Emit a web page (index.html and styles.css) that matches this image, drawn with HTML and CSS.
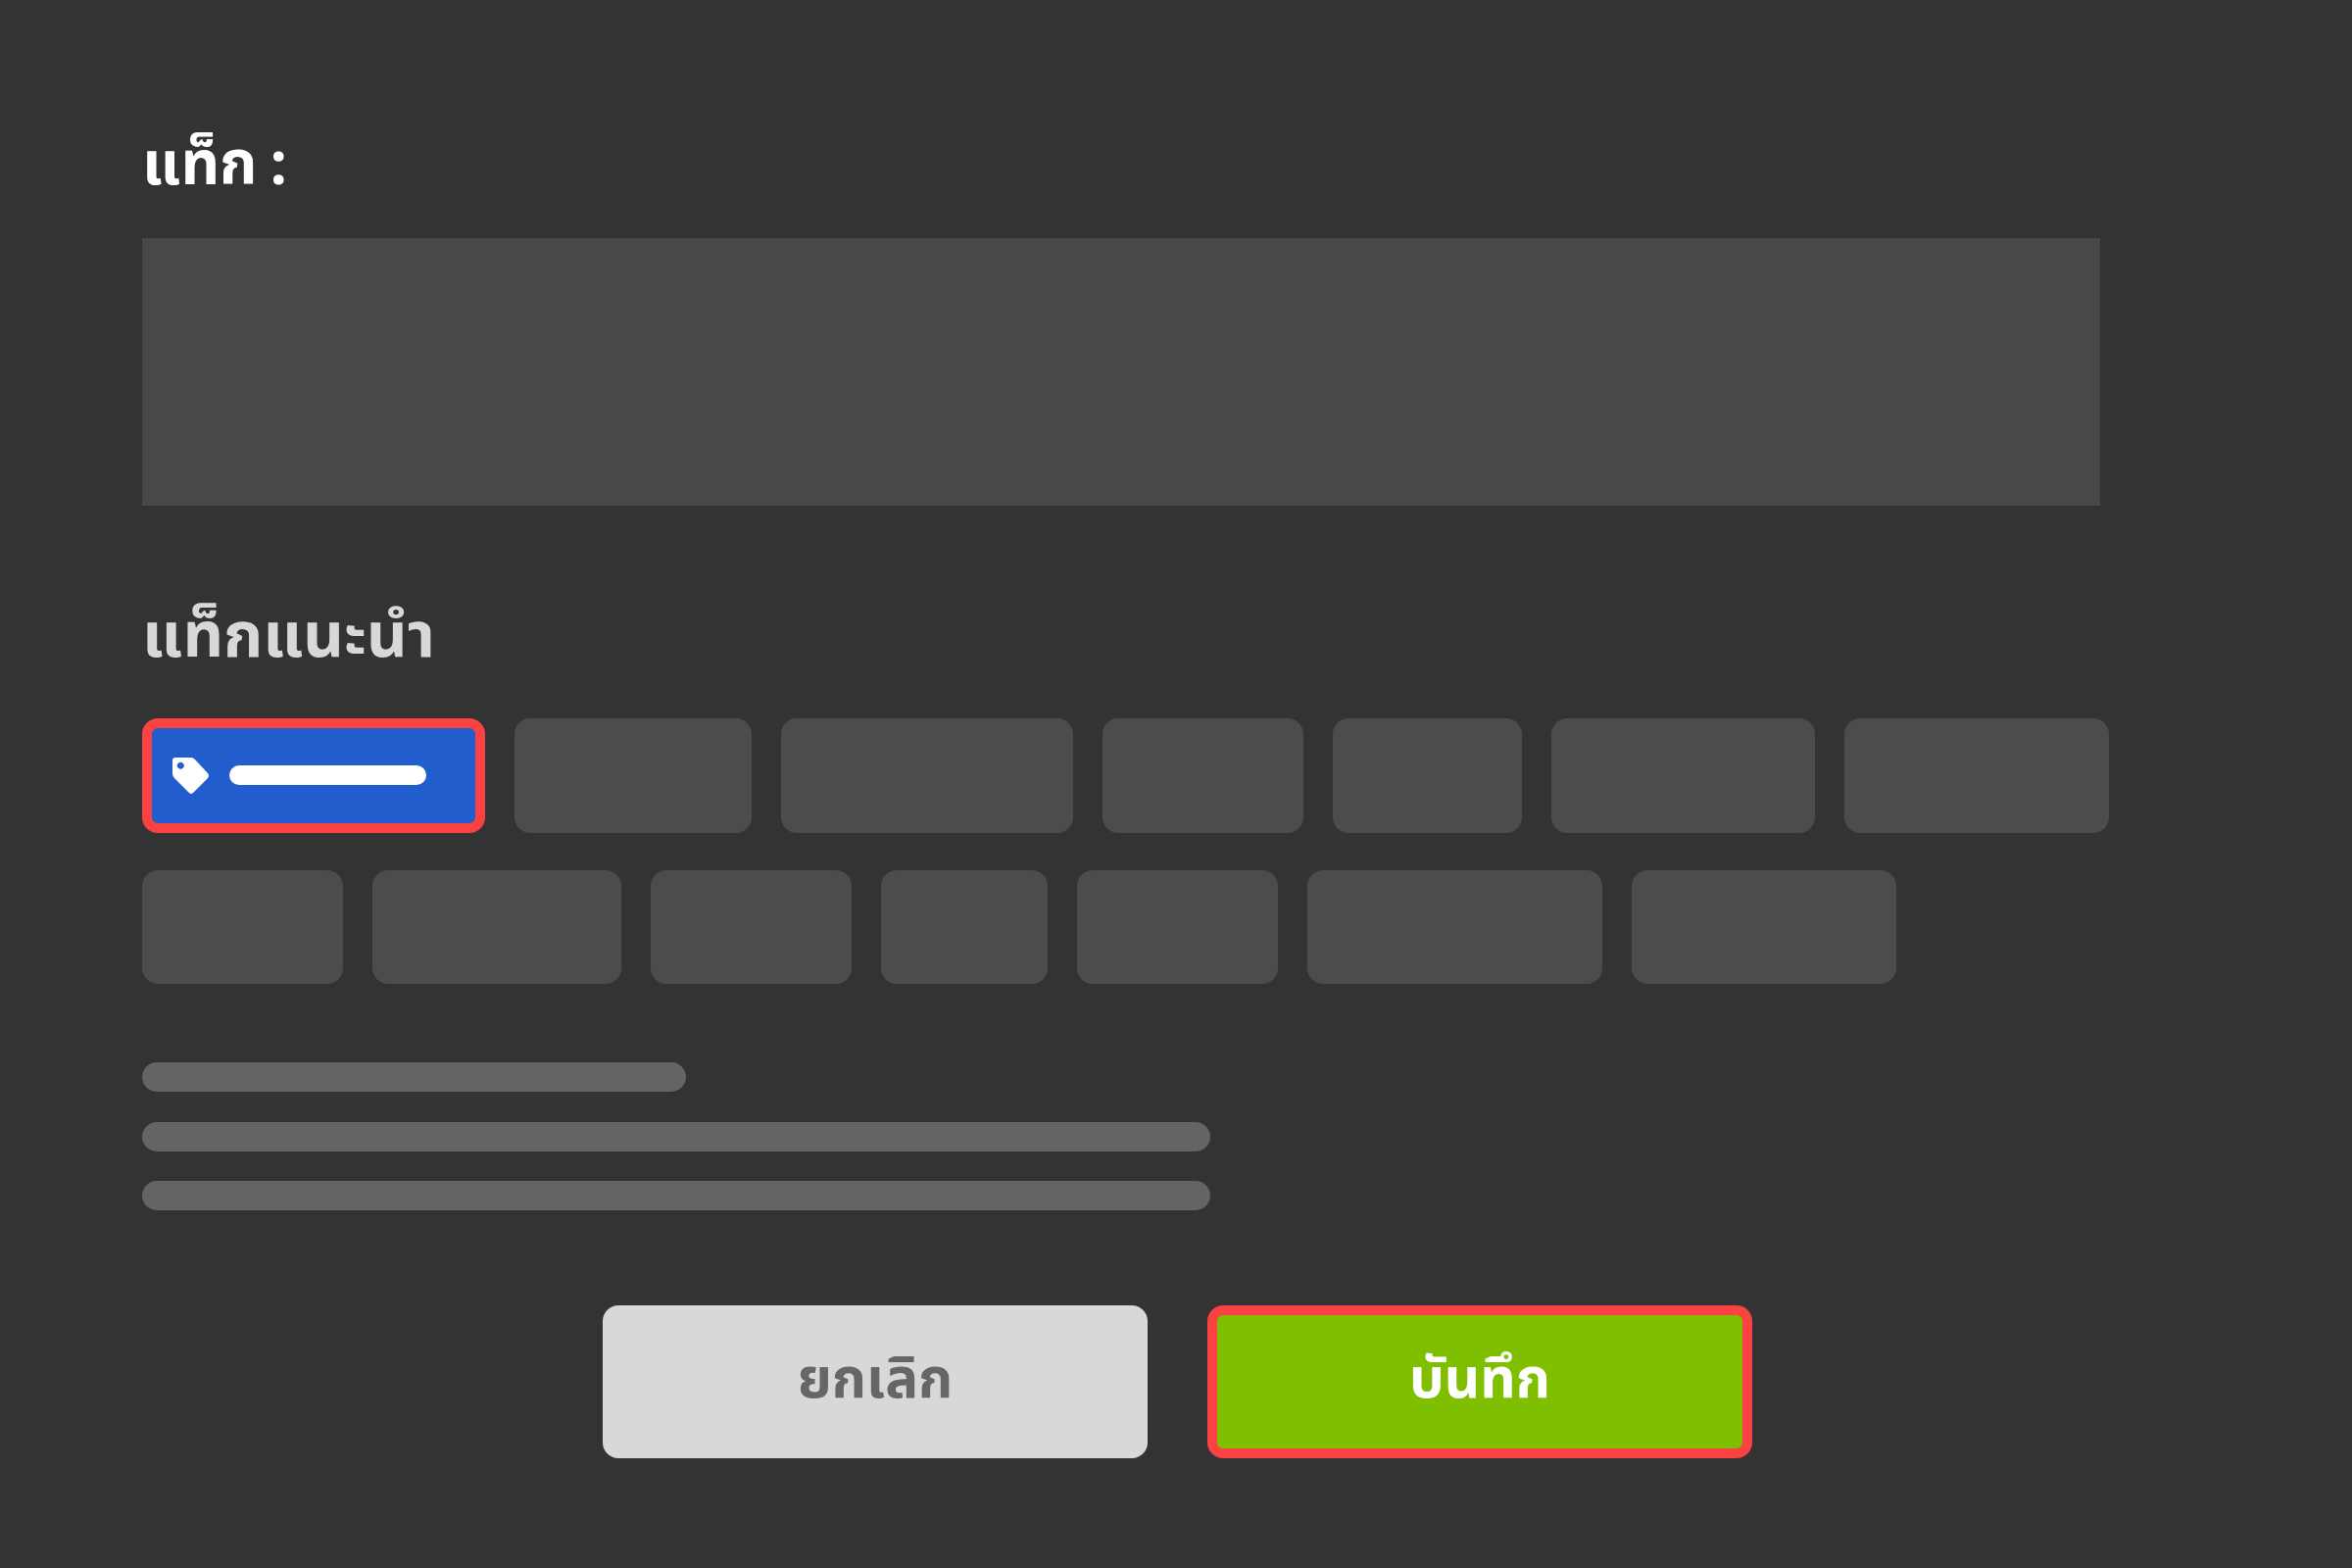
FILE: index.html
```html
<!DOCTYPE html>
<html lang="th">
<head>
    <meta charset="UTF-8">
    <title>แท็ก</title>
    <link rel="stylesheet" href="styles.css">
</head>
<body>

<div class="page">
    <h1 class="title">แท็ก :</h1>
    <div class="tag-input"></div>

    <h2 class="subtitle">แท็กแนะนำ</h2>
    <div class="chips">
        <div class="chip chip-active">
            <svg class="tag-icon" viewBox="0 0 37 37">
                <path fill="#fff" fill-rule="evenodd" d="M3 0H19Q21 0 23 2L36 16Q38 18.5 36 21L21 36Q19 38 17 36L2 21Q0 19 0 16V3Q0 0 3 0ZM8.3 4.8a3.5 3.5 0 1 0 .01 0Z"/>
            </svg>
            <div class="chip-line"></div>
        </div>
        <div class="chip w-242"></div>
        <div class="chip w-298"></div>
        <div class="chip w-206"></div>
        <div class="chip w-193"></div>
        <div class="chip w-269"></div>
        <div class="chip w-269"></div>
        <div class="chip w-206"></div>
        <div class="chip w-254"></div>
        <div class="chip w-206"></div>
        <div class="chip w-170"></div>
        <div class="chip w-206"></div>
        <div class="chip w-301"></div>
        <div class="chip w-269"></div>
    </div>

    <div class="lines">
        <div class="line line-short"></div>
        <div class="line"></div>
        <div class="line"></div>
    </div>

    <div class="actions">
        <div class="btn btn-cancel">ยกเลิก</div>
        <div class="btn btn-save">บันทึก</div>
    </div>
</div>

</body>
</html>
```
FILE: styles.css
```css
body {
    margin: 0;
    background-color: #333;
    font-family: "Noto Sans Thai", "Noto Sans", Roboto, sans-serif;
}
.page {
    box-sizing: border-box;
    width: 2400px;
    height: 1600px;
    padding: 120px 0 0 145px;
    overflow: hidden;
}
.title {
    margin: 0;
    height: 123px;
    font-size: 61.5px;
    line-height: 100px;
    font-weight: 700;
    word-spacing: -3px;
    color: #fff;
}
.tag-input {
    width: 1998px;
    height: 273px;
    background-color: #484848;
}
.subtitle {
    margin: 85px 0 0;
    height: 132px;
    font-size: 64.5px;
    line-height: 100px;
    font-weight: 700;
    color: #d8d8d8;
}
.chips {
    display: flex;
    flex-wrap: wrap;
    gap: 38px 30px;
    width: 2040px;
}
.chip {
    box-sizing: border-box;
    height: 116.6px;
    border-radius: 16px;
    background-color: #4c4c4c;
}
.chip-active {
    display: flex;
    align-items: center;
    width: 350px;
    padding-left: 21px;
    background-color: #215dcc;
    border: 10px solid #fb4242;
}
.tag-icon {
    width: 37px;
    height: 37px;
}
.chip-line {
    width: 201px;
    height: 20px;
    margin-left: 21px;
    border-radius: 10px;
    background-color: #fff;
}
.w-170 { width: 170px; }
.w-193 { width: 193px; }
.w-206 { width: 205px; }
.w-242 { width: 242px; }
.w-254 { width: 254px; }
.w-269 { width: 269.5px; }
.w-298 { width: 297.5px; }
.w-301 { width: 301px; }
.lines {
    display: flex;
    flex-direction: column;
    gap: 30.6px;
    margin-top: 79.8px;
}
.line {
    width: 1090px;
    height: 30px;
    border-radius: 15px;
    background-color: #646464;
}
.line-short {
    width: 555px;
}
.actions {
    display: flex;
    justify-content: center;
    gap: 61px;
    margin: 97px 0 0 -142px;
}
.btn {
    box-sizing: border-box;
    width: 556px;
    height: 156px;
    padding-bottom: 4px;
    border-radius: 16px;
    display: flex;
    align-items: center;
    justify-content: center;
    font-size: 56.5px;
    font-weight: 700;
}
.btn-cancel {
    background-color: #d8d8d8;
    color: #666;
}
.btn-save {
    background-color: #7fbf00;
    color: #fff;
    border: 10px solid #fb4242;
}
```
